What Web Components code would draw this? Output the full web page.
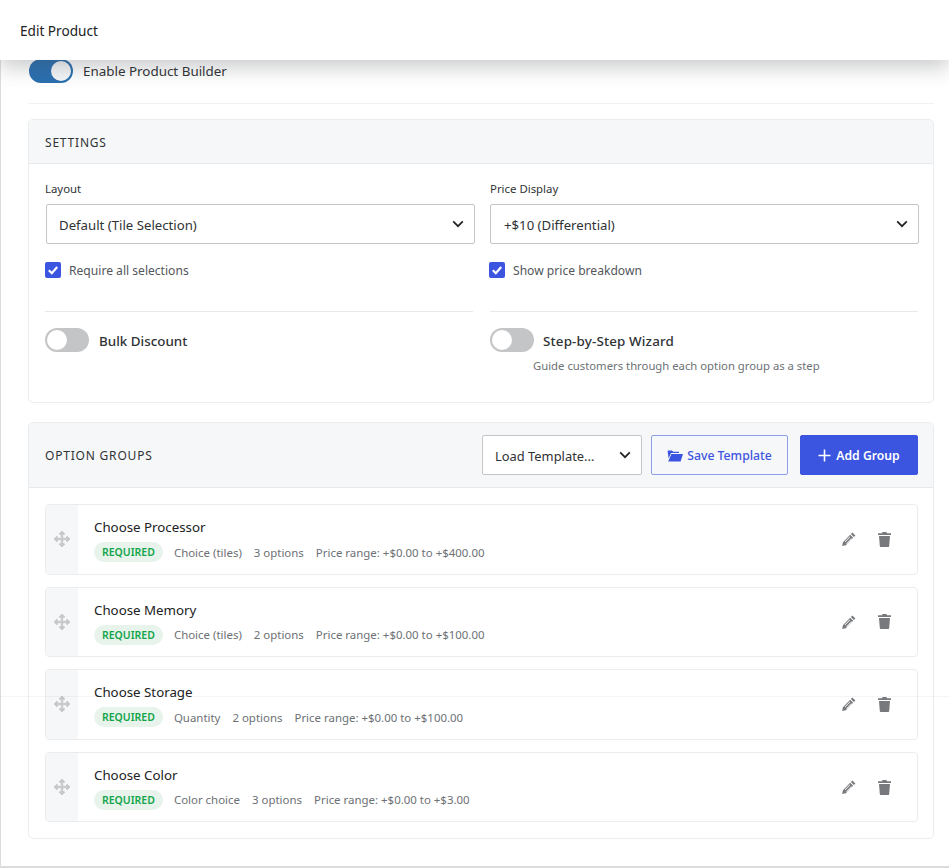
<!DOCTYPE html>
<html>
<head>
<meta charset="utf-8">
<title>Edit Product</title>
<style>
  html, body { margin: 0; height: 100%; background: #fff; }
  body { font-family: "Noto Sans", sans-serif; color: #202223; overflow: hidden; }
</style>
</head>
<body>
<template id="icons">
  <svg id="move" viewBox="0 0 16 16"><path fill="currentColor" d="M8 0l2.8 2.8-.9 1L8.7 2.9v4.4h4.4l-.9-1.2 1-.9L16 8l-2.8 2.8-1-.9 .9-1.2H8.7v4.4l1.2-.9 .9 1L8 16l-2.8-2.8 .9-1 1.2 .9V8.7H2.9l.9 1.2-1 .9L0 8l2.8-2.8 1 .9-.9 1.2h4.4V2.9l-1.2 .9-.9-1z" stroke="currentColor" stroke-width=".9"/></svg>
</template>

<app-header>Edit Product</app-header>
<edit-page>
  <toggle-switch on>Enable Product Builder</toggle-switch>
  <panel-card heading="Settings">
    <settings-grid>
      <field-box label="Layout">
        <select-box style="margin: 0 -2px 0 1px">Default (Tile Selection)</select-box>
        <check-box>Require all selections</check-box>
      </field-box>
      <field-box label="Price Display">
        <select-box style="margin: 0 -1px 0 0; padding-left: 13px">+$10 (Differential)</select-box>
        <check-box style="margin-left: -1px">Show price breakdown</check-box>
      </field-box>
      <feature-box><toggle-switch strong>Bulk Discount</toggle-switch></feature-box>
      <feature-box hint="Guide customers through each option group as a step"><toggle-switch strong style="gap: 9px; letter-spacing: .15px">Step-by-Step Wizard</toggle-switch></feature-box>
    </settings-grid>
  </panel-card>
  <panel-card heading="Option Groups" tall>
    <select-box slot="actions" compact>Load Template...</select-box>
    <action-button slot="actions" icon="folder">Save Template</action-button>
    <action-button slot="actions" icon="plus" primary>Add Group</action-button>
    <group-list>
      <group-row name="Choose Processor" kind="Choice (tiles)" count="3 options" range="Price range: +$0.00 to +$400.00"></group-row>
      <group-row name="Choose Memory" kind="Choice (tiles)" count="2 options" range="Price range: +$0.00 to +$100.00"></group-row>
      <group-row name="Choose Storage" kind="Quantity" count="2 options" range="Price range: +$0.00 to +$100.00"></group-row>
      <group-row name="Choose Color" kind="Color choice" count="3 options" range="Price range: +$0.00 to +$3.00"></group-row>
    </group-list>
  </panel-card>
</edit-page>
<fold-line></fold-line>

<script>
  const sheet = (css, html) => `<style>${css}</style>${html}`;

  class AppHeader extends HTMLElement {
    constructor() {
      super();
      this.attachShadow({ mode: 'open' });
      this.shadowRoot.innerHTML = sheet(`
        :host {
          display: flex; align-items: center; height: 60px; padding-left: 20px;
          background: #fff; position: relative; z-index: 2;
          font-size: 13.6px; color: #202223;
          box-shadow: 0 6px 22px rgba(70, 74, 80, .32);
        }`, `<slot></slot>`);
    }
  }

  class EditPage extends HTMLElement {
    constructor() {
      super();
      this.attachShadow({ mode: 'open' });
      this.shadowRoot.innerHTML = sheet(`
        :host {
          display: flex; flex-direction: column; box-sizing: border-box;
          height: 808px; padding: 0 15px 0 27px;
          border-left: 1px solid #dcdcdc; border-bottom: 2px solid #dcdcdc;
        }
        .top { height: 44px; margin-top: -1px; padding-left: 1px; display: flex; align-items: flex-start; border-bottom: 1px solid #f1f2f3; margin-bottom: 15px; }
        .cards { display: flex; flex-direction: column; gap: 19px; }
      `, `<div class="top"><slot name="top"></slot></div><div class="cards"><slot></slot></div>`);
    }
    connectedCallback() {
      this.querySelector('toggle-switch').slot = 'top';
    }
  }

  class ToggleSwitch extends HTMLElement {
    constructor() {
      super();
      this.attachShadow({ mode: 'open' });
      this.shadowRoot.innerHTML = sheet(`
        :host { display: inline-flex; align-items: center; gap: 10px; font-size: 13.4px; color: #303335; height: 24px; }
        :host([strong]) { font-weight: 500; font-size: 13.4px; }
        :host([strong]) slot { display: block; padding-top: 2px; }
        .track { width: 44px; height: 24px; border-radius: 12px; background: #c4c5c7; position: relative; flex: none; }
        .knob { position: absolute; top: 2px; left: 2px; width: 20px; height: 20px; border-radius: 50%; background: #fff; }
        :host([on]) .track { background: #2a6fb0; }
        :host([on]) .knob { left: 22px; background: #f5f7f9; }
      `, `<span class="track"><span class="knob"></span></span><slot></slot>`);
    }
  }

  class PanelCard extends HTMLElement {
    constructor() {
      super();
      this.attachShadow({ mode: 'open' });
      this.shadowRoot.innerHTML = sheet(`
        :host { display: block; border: 1px solid #ebecee; border-radius: 5px; overflow: hidden; background: #fff; }
        header {
          height: 43px; background: #f6f7f8; border-bottom: 1px solid #e8e9eb;
          display: flex; align-items: center; justify-content: space-between;
          padding: 0 15px 0 16px;
        }
        :host([tall]) header { height: 64px; }
        .title { font-size: 12px; letter-spacing: .8px; text-transform: uppercase; color: #303335; position: relative; top: .5px; }
        .actions { display: flex; align-items: center; gap: 9px; }
        .body { padding: 16px 15px 16px 16px; }
      `, `<header><span class="title"></span><div class="actions"><slot name="actions"></slot></div></header><div class="body"><slot></slot></div>`);
    }
    connectedCallback() {
      this.shadowRoot.querySelector('.title').textContent = this.getAttribute('heading');
    }
  }

  class SettingsGrid extends HTMLElement {
    constructor() {
      super();
      this.attachShadow({ mode: 'open' });
      this.shadowRoot.innerHTML = sheet(`
        :host { display: grid; grid-template-columns: 428px 428px; column-gap: 17px; }
      `, `<slot></slot>`);
    }
  }

  class FieldBox extends HTMLElement {
    constructor() {
      super();
      this.attachShadow({ mode: 'open' });
      this.shadowRoot.innerHTML = sheet(`
        :host { display: flex; flex-direction: column; height: 131px; box-sizing: border-box; }
        label { font-size: 11.4px; line-height: 16px; margin: 1px 0 7px; color: #303335; }
        .stack { display: flex; flex-direction: column; gap: 18px; }
      `, `<label></label><div class="stack"><slot></slot></div>`);
    }
    connectedCallback() {
      this.shadowRoot.querySelector('label').textContent = this.getAttribute('label');
    }
  }

  class SelectBox extends HTMLElement {
    constructor() {
      super();
      this.attachShadow({ mode: 'open' });
      this.shadowRoot.innerHTML = sheet(`
        :host {
          display: flex; align-items: center; justify-content: space-between; box-sizing: border-box;
          height: 40px; padding: 1px 10px 0 12px; background: #fff;
          border: 1px solid #c4c5c7; border-radius: 2px; font-size: 13.2px; color: #303335;
        }
        :host([compact]) { width: 160px; font-size: 12.9px; }
        svg { width: 12px; height: 8px; flex: none; margin-top: -1px; }
      `, `<slot></slot><svg viewBox="0 0 12 8"><path d="M1.2 1.4 6 6.2l4.8-4.8" fill="none" stroke="#202223" stroke-width="1.7"/></svg>`);
    }
  }

  class CheckBox extends HTMLElement {
    constructor() {
      super();
      this.attachShadow({ mode: 'open' });
      this.shadowRoot.innerHTML = sheet(`
        :host { display: flex; align-items: center; gap: 8px; font-size: 12.1px; color: #53575b; height: 16px; }
        svg { width: 16px; height: 16px; flex: none; }
      `, `<svg viewBox="0 0 16 16"><rect width="16" height="16" rx="2" fill="#3b55e0"/><path d="M3.8 8.2 6.8 11.2 12.2 5" fill="none" stroke="#fff" stroke-width="2.2"/></svg><slot></slot>`);
    }
  }

  class FeatureBox extends HTMLElement {
    constructor() {
      super();
      this.attachShadow({ mode: 'open' });
      this.shadowRoot.innerHTML = sheet(`
        :host { display: block; border-top: 1px solid #e8e9eb; height: 75px; padding-top: 16px; box-sizing: border-box; }
        p { margin: 1px 0 0 43px; font-size: 11.3px; line-height: 16px; color: #6d7175; }
        p:empty { display: none; }
      `, `<slot></slot><p></p>`);
    }
    connectedCallback() {
      this.shadowRoot.querySelector('p').textContent = this.getAttribute('hint') || '';
    }
  }

  class ActionButton extends HTMLElement {
    constructor() {
      super();
      this.attachShadow({ mode: 'open' });
      this.shadowRoot.innerHTML = sheet(`
        :host {
          display: inline-flex; align-items: center; justify-content: center; gap: 4px; box-sizing: border-box;
          height: 40px; width: 137px; border: 1px solid #8e9fe8; border-radius: 2px;
          font-size: 12.2px; font-weight: 500; color: #3b55e0; background: #f6f7f8;
        }
        :host([primary]) { width: 118px; margin-left: 3px; background: #3b55e0; border-color: #3b55e0; color: #fff; font-weight: 600; gap: 5px; }
        svg { flex: none; }
        .icon { display: flex; }
      `, `<span class="icon"></span><slot></slot>`);
    }
    connectedCallback() {
      const icon = this.getAttribute('icon');
      this.shadowRoot.querySelector('.icon').innerHTML = icon === 'plus'
        ? `<svg width="13" height="13" viewBox="0 0 13 13"><path d="M6.5 .5v12M.5 6.5h12" stroke="#fff" stroke-width="1.6"/></svg>`
        : `<svg width="16" height="13" viewBox="0 0 16 13"><path fill="currentColor" d="M1 1.5h4l1.2 1.2H12V4H4L1.6 9.5 .6 2.2zM4.4 5H16l-2.4 7.5H1.2z"/></svg>`;
    }
  }

  class GroupList extends HTMLElement {
    constructor() {
      super();
      this.attachShadow({ mode: 'open' });
      this.shadowRoot.innerHTML = sheet(`
        :host { display: flex; flex-direction: column; gap: 12px; }
      `, `<slot></slot>`);
    }
  }

  class GroupRow extends HTMLElement {
    constructor() {
      super();
      this.attachShadow({ mode: 'open' });
      const move = document.getElementById('icons').content.querySelector('#move').outerHTML;
      this.shadowRoot.innerHTML = sheet(`
        :host {
          display: flex; box-sizing: border-box; height: 70.6px; border: 1px solid #ebecee; border-radius: 4px;
          overflow: hidden; background: #fff;
        }
        .handle { width: 31px; padding-right: 1px; flex: none; background: #f6f7f8; display: flex; align-items: center; justify-content: center; color: #c6c8cb; }
        .handle svg { width: 16px; height: 16px; }
        .main { flex: 1; padding: 13px 0 0 16px; }
        h3 { margin: 0; font-size: 13.3px; line-height: 18px; font-weight: 400; color: #202223; }
        .meta { display: flex; align-items: center; gap: 12px; margin-top: 6px; font-size: 11.45px; color: #6d7175; }
        .badge {
          height: 20px; line-height: 20px; padding: 0 8px; border-radius: 10px; background: #e8f3ec;
          color: #12a54a; font-size: 10.5px; font-weight: 600; margin-right: -1px;
        }
        .tools { display: flex; align-items: center; gap: 22px; padding-right: 26px; color: #77797c; }
        svg { display: block; }
      `, `
        <div class="handle">${move}</div>
        <div class="main">
          <h3></h3>
          <div class="meta"><span class="badge">REQUIRED</span><span class="kind"></span><span class="count"></span><span class="range"></span></div>
        </div>
        <div class="tools">
          <svg width="14" height="14" viewBox="0 0 14 14"><path fill="currentColor" d="M10.4.6l3 3-1.5 1.5-3-3zM8.2 2.8l3 3-7.4 7.4-3.6.7.7-3.6zM7.8 4.6 2.6 9.8l.5.5 5.2-5.2zM9.4 6.2 4.2 11.4l.5.5 5.2-5.2z" fill-rule="evenodd"/></svg>
          <svg width="13" height="15" viewBox="0 0 13 15"><path fill="currentColor" d="M4.6 0h3.8l.7 1.3H13v1.6H0V1.3h3.9zM1 4h11l-.8 10a1 1 0 0 1-1 1H2.8a1 1 0 0 1-1-1z"/></svg>
        </div>`);
    }
    connectedCallback() {
      const root = this.shadowRoot;
      root.querySelector('h3').textContent = this.getAttribute('name');
      root.querySelector('.kind').textContent = this.getAttribute('kind');
      root.querySelector('.count').textContent = this.getAttribute('count');
      root.querySelector('.range').textContent = this.getAttribute('range');
    }
  }

  class FoldLine extends HTMLElement {
    constructor() {
      super();
      this.attachShadow({ mode: 'open' });
      this.shadowRoot.innerHTML = sheet(`
        :host { position: absolute; left: 0; right: 0; top: 696px; height: 1px; background: rgba(60, 70, 80, .06); }
      `, ``);
    }
  }

  customElements.define('app-header', AppHeader);
  customElements.define('edit-page', EditPage);
  customElements.define('toggle-switch', ToggleSwitch);
  customElements.define('panel-card', PanelCard);
  customElements.define('settings-grid', SettingsGrid);
  customElements.define('field-box', FieldBox);
  customElements.define('select-box', SelectBox);
  customElements.define('check-box', CheckBox);
  customElements.define('feature-box', FeatureBox);
  customElements.define('action-button', ActionButton);
  customElements.define('group-list', GroupList);
  customElements.define('group-row', GroupRow);
  customElements.define('fold-line', FoldLine);
</script>
</body>
</html>
